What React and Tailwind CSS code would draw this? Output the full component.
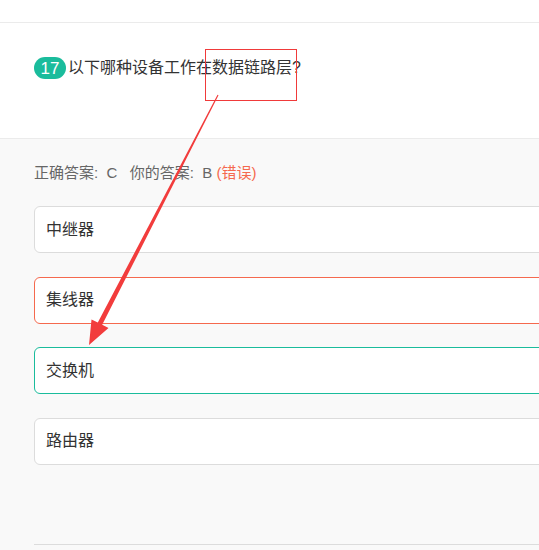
import React from "react";

const options = [
  { text: "中继器", state: "normal" },
  { text: "集线器", state: "wrong" },
  { text: "交换机", state: "right" },
  { text: "路由器", state: "normal" },
];

const borderFor = {
  normal: "border-[#dcdcdc]",
  wrong: "border-[#f5694e]",
  right: "border-[#1abc9c]",
};

export default function App() {
  return (
    <div
      className="relative w-[539px] h-[550px] overflow-hidden bg-[#f9f9f9] text-[#333]"
      style={{ fontFamily: '"Liberation Sans", "Noto Sans CJK SC", sans-serif' }}
    >
      {/* top strip */}
      <div className="h-[23px] bg-white border-b border-[#ebebeb]"></div>

      {/* question */}
      <div className="h-[116px] bg-white border-b border-[#ebebeb] pl-[34px] pt-[34px]">
        <div className="flex items-center h-[22px]">
          <span className="flex items-center justify-center w-[32px] h-[22px] rounded-full bg-[#1abc9c] text-white text-[17px] leading-none">
            17
          </span>
          <span className="ml-[2px] text-[16px] leading-none text-[#333]">
            以下哪种设备工作在数据链路层?
          </span>
        </div>
      </div>

      {/* answers */}
      <div className="pl-[34px] pt-[25px]">
        <div className="text-[15px] leading-[18px] text-[#666]">
          正确答案:&nbsp; C&nbsp;&nbsp;&nbsp;你的答案:&nbsp; B <span className="text-[#f5694e]">(错误)</span>
        </div>

        <div className="mt-[24px] flex flex-col gap-[23.5px] w-[560px]">
          {options.map((o) => (
            <div
              key={o.text}
              className={`h-[47px] flex items-center pl-[11px] bg-white border rounded-[6px] ${borderFor[o.state]} text-[16px] text-[#333]`}
            >
              {o.text}
            </div>
          ))}
        </div>

        <div className="mt-[79px] h-px bg-[#dcdcdc] w-[560px]"></div>
      </div>

      {/* annotation overlay */}
      <svg className="absolute left-0 top-0 pointer-events-none" width="539" height="550">
        <rect x="205.5" y="49.5" width="91" height="51" fill="none" stroke="#f03a3a" strokeWidth="1" />
        <polygon
          points="218.5,95.2 217.5,94.8 97.8,322.6 91.5,319.4 89,345 108.5,328 102.2,324.8"
          fill="#f23c3c"
        />
      </svg>
    </div>
  );
}
